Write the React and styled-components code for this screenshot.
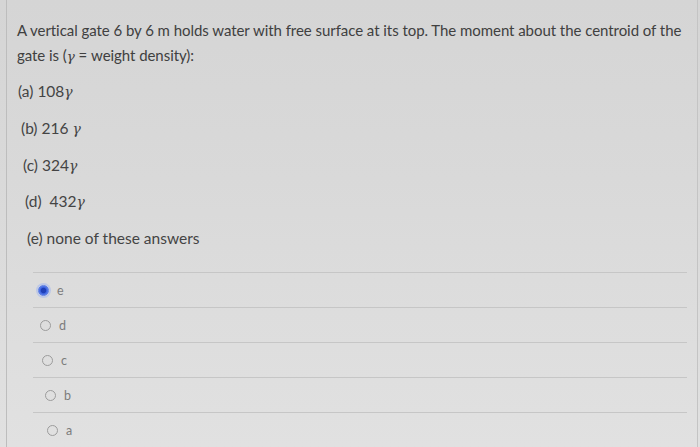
import React from "react";
import styled, { createGlobalStyle } from "styled-components";

const Global = createGlobalStyle`
  html, body { margin: 0; padding: 0; }
  body {
    width: 700px;
    height: 447px;
    overflow: hidden;
    background: linear-gradient(180deg, #d5d5d5 0%, #d9d9d9 40%, #e1e1e1 100%);
    font-family: Lato, "Open Sans", sans-serif;
  }
`;

const Sheet = styled.div`
  box-sizing: border-box;
  width: 692px;
  height: 447px;
  margin-left: 6px;
  padding: 18px 0 0 10px;
  border-left: 1px solid #bdbdbd;
  border-right: 1px solid #c4c4c4;
`;

const Question = styled.p`
  margin: 0;
  font-size: 15px;
  line-height: 25px;
  color: #404040;
  letter-spacing: -0.05px;
`;

const Gamma = styled.span`
  font-family: "DejaVu Serif", serif;
  font-style: italic;
  font-size: 0.9em;
`;

const Options = styled.div`
  display: flex;
  flex-direction: column;
  gap: 17.8px;
  margin-top: 13px;
`;

const Option = styled.div`
  font-size: 15.5px;
  line-height: 18px;
  color: #444;
  padding-left: ${(p) => p.$indent}px;
  white-space: pre;
`;

const Answers = styled.div`
  margin: 25px 10px 0 ${(p) => p.$left}px;
  display: flex;
  flex-direction: column;
`;

const Row = styled.label`
  box-sizing: border-box;
  display: flex;
  align-items: center;
  gap: 8px;
  height: 35px;
  border-top: 1px solid #c6c6c6;
  padding-left: ${(p) => p.$indent}px;
  font-size: 12.5px;
  color: #7c7c7c;
`;

const Radio = styled.span`
  box-sizing: border-box;
  width: 11px;
  height: 11px;
  border-radius: 50%;
  border: 1.5px solid ${(p) => (p.$on ? "#5a7ce6" : "#9c9c9c")};
  background: ${(p) =>
    p.$on ? "radial-gradient(circle, #1f3fb8 0 35%, #3d64e0 50%, #7e9cf2 100%)" : "transparent"};
  box-shadow: ${(p) => (p.$on ? "0 0 0 2px rgba(150,175,245,0.45)" : "none")};
`;

const options = [
  ["(a) 108", "", 1],
  ["(b) 216 ", "", 4],
  ["(c) 324", "", 6],
  ["(d)  432", "", 8],
  ["(e) none of these answers", null, 10],
];

const answers = [
  ["e", true, 0],
  ["d", false, 2],
  ["c", false, 4],
  ["b", false, 7],
  ["a", false, 9],
];

export default function App() {
  return (
    <>
      <Global />
      <Sheet>
        <Question>
          A vertical gate 6 by 6 m holds water with free surface at its top. The moment about the centroid of the gate is (<Gamma>γ</Gamma> = weight density):
        </Question>
        <Options>
          {options.map(([t, g, i]) => (
            <Option key={t} $indent={i}>
              {t}
              {g !== null && <Gamma>γ</Gamma>}
            </Option>
          ))}
        </Options>
        <Answers $left={16}>
          {answers.map(([t, on, i]) => (
            <Row key={t} $indent={i + 5}>
              <Radio $on={on} />
              {t}
            </Row>
          ))}
        </Answers>
      </Sheet>
    </>
  );
}
